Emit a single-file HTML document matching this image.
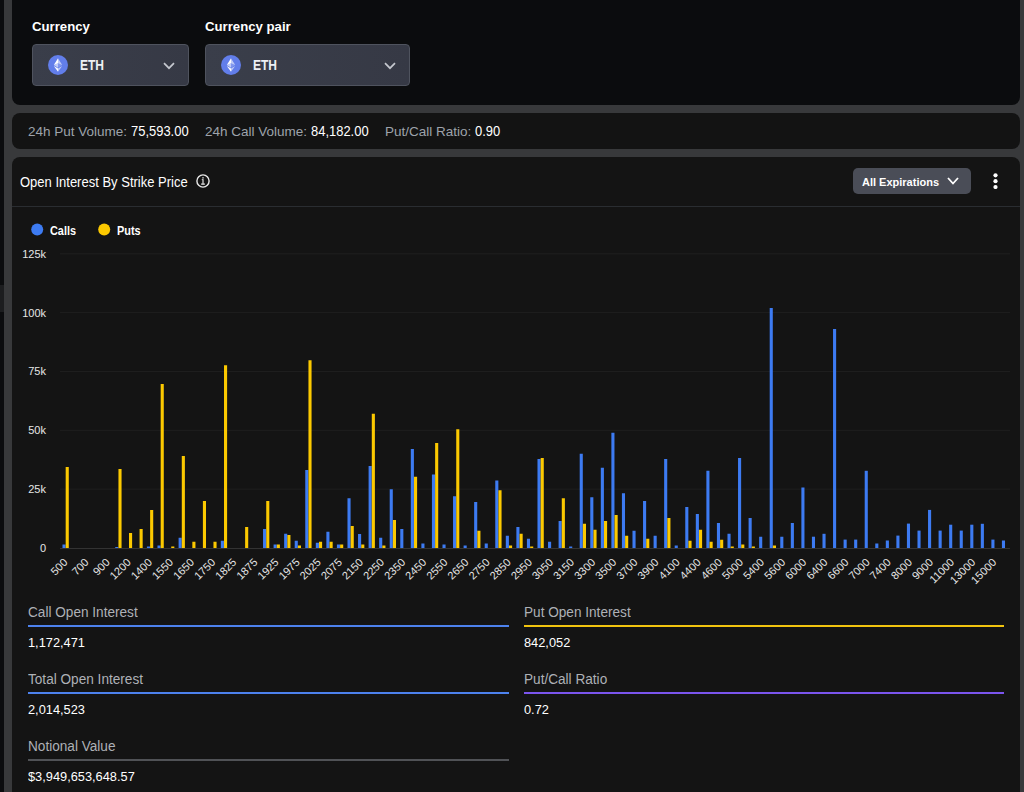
<!DOCTYPE html>
<html><head><meta charset="utf-8"><style>
*{margin:0;padding:0;box-sizing:border-box}
html,body{width:1024px;height:792px;overflow:hidden;background:#0b0c0e;font-family:"Liberation Sans",sans-serif;color:#fff}
.strip{position:absolute;left:4px;top:0;width:1020px;height:792px;background:#38393b}
.lstrip{position:absolute;left:0;top:285px;width:4px;height:27px;background:#1c1d1f}
.p1{position:absolute;left:12px;top:-10px;width:1008px;height:115px;background:#0b0c0e;border-radius:8px}
.p2{position:absolute;left:12px;top:113px;width:1008px;height:35.5px;background:#131313;border-radius:8px}
.p3{position:absolute;left:12px;top:157px;width:1008px;height:650px;background:#141414;border-radius:8px}
.lab{position:absolute;top:18.6px;font-weight:bold;font-size:13.2px;color:#fff}
.sel{position:absolute;top:44px;height:42px;background:linear-gradient(90deg,#3a3e4a,#363945);border:1px solid #4f535e;border-radius:4px}
.sel .ic{position:absolute;left:15px;top:10px;width:20px;height:20px}
.sel .t{position:absolute;top:11.5px;font-size:14.4px;font-weight:bold;color:#eef0f4;transform:scaleX(0.835);transform-origin:0 0}
.sel .ch{position:absolute;top:11px}
.stats{position:absolute;top:122.8px;font-size:13.5px;color:#9ea3ab;white-space:nowrap}
.stats b{font-weight:normal;color:#fff;font-size:14px;display:inline-block;transform:scaleX(0.925);transform-origin:0 0}
.title{position:absolute;left:20px;top:173.5px;font-size:14px;color:#fff;transform:scaleX(0.929);transform-origin:0 0;white-space:nowrap}
.info{position:absolute;left:196px;top:173.9px;width:14px;height:14px}
.divider{position:absolute;left:12px;top:206px;width:1008px;height:1px;background:#2a2d31}
.btn{position:absolute;left:853px;top:168px;width:118px;height:26px;background:#4a4d57;border-radius:5px}
.btn .t{position:absolute;left:9px;top:8px;font-size:11px;font-weight:bold;color:#fff}
.dots{position:absolute;left:993px;top:173px;width:5px;height:16px}
.leg{position:absolute;top:224px;font-size:12.6px;font-weight:bold;color:#fff;transform:scaleX(0.865);transform-origin:0 0}
.dot{position:absolute;top:223.2px;width:12px;height:12px;border-radius:6px}
svg.chart{position:absolute;left:0;top:0}
.yl{font-size:11px;fill:#e6e6e6;font-family:"Liberation Sans",sans-serif}
.xl{font-size:11px;fill:#e6e6e6;font-family:"Liberation Sans",sans-serif}
.sl{position:absolute;font-size:14px;color:#aeb1b7;margin-top:-0.3px;transform:scaleX(0.972);transform-origin:0 0;white-space:nowrap}
.sv{position:absolute;font-size:13.7px;color:#fff;margin-top:0.5px;transform:scaleX(0.935);transform-origin:0 0;white-space:nowrap}
.ln{position:absolute;height:2px}
</style></head><body>
<div class="strip"></div>
<div class="lstrip"></div>
<div class="p1"></div>
<div class="p2"></div>
<div class="p3"></div>
<div class="lab" style="left:32px">Currency</div>
<div class="lab" style="left:205px">Currency pair</div>
<div class="sel" style="left:32px;width:157px"><div class="ic"><svg width="20" height="20" viewBox="0 0 20 20"><circle cx="10" cy="10" r="10" fill="#627eea"/><path d="M10 3.2 L10 8.2 L14.2 10.1 Z" fill="#fff" fill-opacity="0.6"/><path d="M10 3.2 L5.8 10.1 L10 8.2 Z" fill="#fff"/><path d="M10 13.6 L10 16.8 L14.2 11 Z" fill="#fff" fill-opacity="0.6"/><path d="M10 16.8 L10 13.6 L5.8 11 Z" fill="#fff"/><path d="M10 12.8 L14.2 10.1 L10 8.2 Z" fill="#fff" fill-opacity="0.2"/><path d="M5.8 10.1 L10 12.8 L10 8.2 Z" fill="#fff" fill-opacity="0.6"/></svg></div><div class="t" style="left:47px">ETH</div><div class="ch" style="left:129.6px"><svg width="12" height="8" viewBox="0 0 12 8"><path d="M1 1.2 L6 6.2 L11 1.2" fill="none" stroke="#c4c7ce" stroke-width="1.7"/></svg></div></div>
<div class="sel" style="left:205px;width:205px"><div class="ic"><svg width="20" height="20" viewBox="0 0 20 20"><circle cx="10" cy="10" r="10" fill="#627eea"/><path d="M10 3.2 L10 8.2 L14.2 10.1 Z" fill="#fff" fill-opacity="0.6"/><path d="M10 3.2 L5.8 10.1 L10 8.2 Z" fill="#fff"/><path d="M10 13.6 L10 16.8 L14.2 11 Z" fill="#fff" fill-opacity="0.6"/><path d="M10 16.8 L10 13.6 L5.8 11 Z" fill="#fff"/><path d="M10 12.8 L14.2 10.1 L10 8.2 Z" fill="#fff" fill-opacity="0.2"/><path d="M5.8 10.1 L10 12.8 L10 8.2 Z" fill="#fff" fill-opacity="0.6"/></svg></div><div class="t" style="left:47px">ETH</div><div class="ch" style="left:177.6px"><svg width="12" height="8" viewBox="0 0 12 8"><path d="M1 1.2 L6 6.2 L11 1.2" fill="none" stroke="#c4c7ce" stroke-width="1.7"/></svg></div></div>
<div class="stats" style="left:28px">24h Put Volume: <b>75,593.00</b></div>
<div class="stats" style="left:205px">24h Call Volume: <b>84,182.00</b></div>
<div class="stats" style="left:385px">Put/Call Ratio: <b>0.90</b></div>
<div class="title">Open Interest By Strike Price</div>
<svg class="info" viewBox="0 0 14 14"><circle cx="7" cy="7" r="6.1" fill="none" stroke="#e8e8e8" stroke-width="1.4"/><rect x="6.3" y="3.2" width="1.4" height="1.3" fill="#e0e0e0"/><rect x="6.4" y="5.2" width="1.2" height="4.6" fill="#e0e0e0"/><rect x="5.8" y="5.2" width="1" height="0.9" fill="#e0e0e0"/><rect x="5.2" y="9.4" width="3.6" height="1.4" fill="#e0e0e0"/></svg>
<div class="divider"></div>
<div class="btn"><div class="t">All Expirations</div><svg style="position:absolute;left:94px;top:9px" width="12" height="8" viewBox="0 0 12 8"><path d="M1 1 L6 6.5 L11 1" fill="none" stroke="#fff" stroke-width="1.8"/></svg></div>
<svg class="dots" viewBox="0 0 5 16"><circle cx="2.5" cy="2.3" r="2.1" fill="#fff"/><circle cx="2.5" cy="8.2" r="2.1" fill="#fff"/><circle cx="2.5" cy="14" r="2.1" fill="#fff"/></svg>
<div class="leg" style="left:50px">Calls</div>
<div class="leg" style="left:117px">Puts</div>
<svg class="chart" width="1024" height="792">
<text x="46" y="552.00" text-anchor="end" class="yl">0</text>
<line x1="60.0" x2="1010.0" y1="489.16" y2="489.16" stroke="#1f1f1f" stroke-width="1"/>
<text x="46" y="493.16" text-anchor="end" class="yl">25k</text>
<line x1="60.0" x2="1010.0" y1="430.32" y2="430.32" stroke="#1f1f1f" stroke-width="1"/>
<text x="46" y="434.32" text-anchor="end" class="yl">50k</text>
<line x1="60.0" x2="1010.0" y1="371.48" y2="371.48" stroke="#1f1f1f" stroke-width="1"/>
<text x="46" y="375.48" text-anchor="end" class="yl">75k</text>
<line x1="60.0" x2="1010.0" y1="312.64" y2="312.64" stroke="#1f1f1f" stroke-width="1"/>
<text x="46" y="316.64" text-anchor="end" class="yl">100k</text>
<line x1="60.0" x2="1010.0" y1="253.80" y2="253.80" stroke="#1f1f1f" stroke-width="1"/>
<text x="46" y="257.80" text-anchor="end" class="yl">125k</text>
<line x1="60.0" x2="1010.0" y1="548.5" y2="548.5" stroke="#333" stroke-width="1"/>
<rect x="62.48" y="544.50" width="3.1" height="3.50" fill="#3d7bf2"/>
<rect x="65.68" y="467.00" width="3.1" height="81.00" fill="#fcc900"/>
<rect x="115.26" y="547.00" width="3.1" height="1.00" fill="#3d7bf2"/>
<rect x="118.46" y="469.00" width="3.1" height="79.00" fill="#fcc900"/>
<rect x="129.01" y="533.00" width="3.1" height="15.00" fill="#fcc900"/>
<rect x="139.57" y="529.00" width="3.1" height="19.00" fill="#fcc900"/>
<rect x="146.92" y="546.50" width="3.1" height="1.50" fill="#3d7bf2"/>
<rect x="150.12" y="510.00" width="3.1" height="38.00" fill="#fcc900"/>
<rect x="157.48" y="545.50" width="3.1" height="2.50" fill="#3d7bf2"/>
<rect x="160.68" y="384.00" width="3.1" height="164.00" fill="#fcc900"/>
<rect x="171.23" y="546.50" width="3.1" height="1.50" fill="#fcc900"/>
<rect x="178.59" y="537.75" width="3.1" height="10.25" fill="#3d7bf2"/>
<rect x="181.79" y="456.00" width="3.1" height="92.00" fill="#fcc900"/>
<rect x="192.34" y="541.75" width="3.1" height="6.25" fill="#fcc900"/>
<rect x="202.90" y="501.00" width="3.1" height="47.00" fill="#fcc900"/>
<rect x="213.46" y="541.75" width="3.1" height="6.25" fill="#fcc900"/>
<rect x="220.81" y="540.75" width="3.1" height="7.25" fill="#3d7bf2"/>
<rect x="224.01" y="365.25" width="3.1" height="182.75" fill="#fcc900"/>
<rect x="245.12" y="527.00" width="3.1" height="21.00" fill="#fcc900"/>
<rect x="263.03" y="529.00" width="3.1" height="19.00" fill="#3d7bf2"/>
<rect x="266.23" y="501.00" width="3.1" height="47.00" fill="#fcc900"/>
<rect x="273.59" y="544.50" width="3.1" height="3.50" fill="#3d7bf2"/>
<rect x="276.79" y="544.50" width="3.1" height="3.50" fill="#fcc900"/>
<rect x="284.14" y="533.75" width="3.1" height="14.25" fill="#3d7bf2"/>
<rect x="287.34" y="535.00" width="3.1" height="13.00" fill="#fcc900"/>
<rect x="294.70" y="540.75" width="3.1" height="7.25" fill="#3d7bf2"/>
<rect x="297.90" y="545.50" width="3.1" height="2.50" fill="#fcc900"/>
<rect x="305.26" y="470.00" width="3.1" height="78.00" fill="#3d7bf2"/>
<rect x="308.46" y="360.25" width="3.1" height="187.75" fill="#fcc900"/>
<rect x="315.81" y="542.75" width="3.1" height="5.25" fill="#3d7bf2"/>
<rect x="319.01" y="541.75" width="3.1" height="6.25" fill="#fcc900"/>
<rect x="326.37" y="531.75" width="3.1" height="16.25" fill="#3d7bf2"/>
<rect x="329.57" y="541.75" width="3.1" height="6.25" fill="#fcc900"/>
<rect x="336.92" y="544.50" width="3.1" height="3.50" fill="#3d7bf2"/>
<rect x="340.12" y="544.50" width="3.1" height="3.50" fill="#fcc900"/>
<rect x="347.48" y="498.25" width="3.1" height="49.75" fill="#3d7bf2"/>
<rect x="350.68" y="526.00" width="3.1" height="22.00" fill="#fcc900"/>
<rect x="358.03" y="534.00" width="3.1" height="14.00" fill="#3d7bf2"/>
<rect x="361.23" y="544.50" width="3.1" height="3.50" fill="#fcc900"/>
<rect x="368.59" y="466.00" width="3.1" height="82.00" fill="#3d7bf2"/>
<rect x="371.79" y="413.75" width="3.1" height="134.25" fill="#fcc900"/>
<rect x="379.14" y="537.75" width="3.1" height="10.25" fill="#3d7bf2"/>
<rect x="382.34" y="545.50" width="3.1" height="2.50" fill="#fcc900"/>
<rect x="389.70" y="489.25" width="3.1" height="58.75" fill="#3d7bf2"/>
<rect x="392.90" y="520.00" width="3.1" height="28.00" fill="#fcc900"/>
<rect x="400.26" y="529.00" width="3.1" height="19.00" fill="#3d7bf2"/>
<rect x="410.81" y="449.00" width="3.1" height="99.00" fill="#3d7bf2"/>
<rect x="414.01" y="476.75" width="3.1" height="71.25" fill="#fcc900"/>
<rect x="421.37" y="543.50" width="3.1" height="4.50" fill="#3d7bf2"/>
<rect x="431.92" y="474.50" width="3.1" height="73.50" fill="#3d7bf2"/>
<rect x="435.12" y="443.00" width="3.1" height="105.00" fill="#fcc900"/>
<rect x="442.48" y="544.50" width="3.1" height="3.50" fill="#3d7bf2"/>
<rect x="453.03" y="496.25" width="3.1" height="51.75" fill="#3d7bf2"/>
<rect x="456.23" y="429.25" width="3.1" height="118.75" fill="#fcc900"/>
<rect x="463.59" y="545.50" width="3.1" height="2.50" fill="#3d7bf2"/>
<rect x="474.14" y="502.00" width="3.1" height="46.00" fill="#3d7bf2"/>
<rect x="477.34" y="530.75" width="3.1" height="17.25" fill="#fcc900"/>
<rect x="484.70" y="543.50" width="3.1" height="4.50" fill="#3d7bf2"/>
<rect x="495.26" y="480.50" width="3.1" height="67.50" fill="#3d7bf2"/>
<rect x="498.46" y="490.25" width="3.1" height="57.75" fill="#fcc900"/>
<rect x="505.81" y="535.75" width="3.1" height="12.25" fill="#3d7bf2"/>
<rect x="509.01" y="545.50" width="3.1" height="2.50" fill="#fcc900"/>
<rect x="516.37" y="527.00" width="3.1" height="21.00" fill="#3d7bf2"/>
<rect x="519.57" y="533.75" width="3.1" height="14.25" fill="#fcc900"/>
<rect x="526.92" y="538.75" width="3.1" height="9.25" fill="#3d7bf2"/>
<rect x="530.12" y="546.50" width="3.1" height="1.50" fill="#fcc900"/>
<rect x="537.48" y="459.00" width="3.1" height="89.00" fill="#3d7bf2"/>
<rect x="540.68" y="458.00" width="3.1" height="90.00" fill="#fcc900"/>
<rect x="548.03" y="541.75" width="3.1" height="6.25" fill="#3d7bf2"/>
<rect x="558.59" y="521.00" width="3.1" height="27.00" fill="#3d7bf2"/>
<rect x="561.79" y="498.25" width="3.1" height="49.75" fill="#fcc900"/>
<rect x="569.14" y="546.50" width="3.1" height="1.50" fill="#3d7bf2"/>
<rect x="579.70" y="453.75" width="3.1" height="94.25" fill="#3d7bf2"/>
<rect x="582.90" y="523.75" width="3.1" height="24.25" fill="#fcc900"/>
<rect x="590.26" y="497.25" width="3.1" height="50.75" fill="#3d7bf2"/>
<rect x="593.46" y="529.75" width="3.1" height="18.25" fill="#fcc900"/>
<rect x="600.81" y="467.75" width="3.1" height="80.25" fill="#3d7bf2"/>
<rect x="604.01" y="521.00" width="3.1" height="27.00" fill="#fcc900"/>
<rect x="611.37" y="432.75" width="3.1" height="115.25" fill="#3d7bf2"/>
<rect x="614.57" y="515.00" width="3.1" height="33.00" fill="#fcc900"/>
<rect x="621.92" y="493.25" width="3.1" height="54.75" fill="#3d7bf2"/>
<rect x="625.12" y="535.75" width="3.1" height="12.25" fill="#fcc900"/>
<rect x="632.48" y="530.75" width="3.1" height="17.25" fill="#3d7bf2"/>
<rect x="643.03" y="501.00" width="3.1" height="47.00" fill="#3d7bf2"/>
<rect x="646.23" y="538.75" width="3.1" height="9.25" fill="#fcc900"/>
<rect x="653.59" y="535.75" width="3.1" height="12.25" fill="#3d7bf2"/>
<rect x="664.14" y="459.00" width="3.1" height="89.00" fill="#3d7bf2"/>
<rect x="667.34" y="518.00" width="3.1" height="30.00" fill="#fcc900"/>
<rect x="674.70" y="545.50" width="3.1" height="2.50" fill="#3d7bf2"/>
<rect x="685.26" y="507.00" width="3.1" height="41.00" fill="#3d7bf2"/>
<rect x="688.46" y="540.75" width="3.1" height="7.25" fill="#fcc900"/>
<rect x="695.81" y="514.00" width="3.1" height="34.00" fill="#3d7bf2"/>
<rect x="699.01" y="529.75" width="3.1" height="18.25" fill="#fcc900"/>
<rect x="706.37" y="470.75" width="3.1" height="77.25" fill="#3d7bf2"/>
<rect x="709.57" y="541.75" width="3.1" height="6.25" fill="#fcc900"/>
<rect x="716.92" y="523.00" width="3.1" height="25.00" fill="#3d7bf2"/>
<rect x="720.12" y="539.75" width="3.1" height="8.25" fill="#fcc900"/>
<rect x="727.48" y="533.75" width="3.1" height="14.25" fill="#3d7bf2"/>
<rect x="730.68" y="546.50" width="3.1" height="1.50" fill="#fcc900"/>
<rect x="738.03" y="458.00" width="3.1" height="90.00" fill="#3d7bf2"/>
<rect x="741.23" y="544.50" width="3.1" height="3.50" fill="#fcc900"/>
<rect x="748.59" y="518.00" width="3.1" height="30.00" fill="#3d7bf2"/>
<rect x="751.79" y="546.50" width="3.1" height="1.50" fill="#fcc900"/>
<rect x="759.14" y="536.75" width="3.1" height="11.25" fill="#3d7bf2"/>
<rect x="769.70" y="308.00" width="3.1" height="240.00" fill="#3d7bf2"/>
<rect x="772.90" y="545.50" width="3.1" height="2.50" fill="#fcc900"/>
<rect x="780.26" y="536.75" width="3.1" height="11.25" fill="#3d7bf2"/>
<rect x="790.81" y="523.00" width="3.1" height="25.00" fill="#3d7bf2"/>
<rect x="801.37" y="487.50" width="3.1" height="60.50" fill="#3d7bf2"/>
<rect x="811.92" y="536.70" width="3.1" height="11.30" fill="#3d7bf2"/>
<rect x="822.48" y="533.80" width="3.1" height="14.20" fill="#3d7bf2"/>
<rect x="833.03" y="329.00" width="3.1" height="219.00" fill="#3d7bf2"/>
<rect x="843.59" y="539.60" width="3.1" height="8.40" fill="#3d7bf2"/>
<rect x="854.14" y="539.60" width="3.1" height="8.40" fill="#3d7bf2"/>
<rect x="864.70" y="470.80" width="3.1" height="77.20" fill="#3d7bf2"/>
<rect x="875.26" y="543.50" width="3.1" height="4.50" fill="#3d7bf2"/>
<rect x="885.81" y="540.50" width="3.1" height="7.50" fill="#3d7bf2"/>
<rect x="896.37" y="535.60" width="3.1" height="12.40" fill="#3d7bf2"/>
<rect x="906.92" y="523.60" width="3.1" height="24.40" fill="#3d7bf2"/>
<rect x="917.48" y="530.60" width="3.1" height="17.40" fill="#3d7bf2"/>
<rect x="928.03" y="509.90" width="3.1" height="38.10" fill="#3d7bf2"/>
<rect x="938.59" y="530.60" width="3.1" height="17.40" fill="#3d7bf2"/>
<rect x="949.14" y="524.70" width="3.1" height="23.30" fill="#3d7bf2"/>
<rect x="959.70" y="530.60" width="3.1" height="17.40" fill="#3d7bf2"/>
<rect x="970.26" y="524.70" width="3.1" height="23.30" fill="#3d7bf2"/>
<rect x="980.81" y="523.80" width="3.1" height="24.20" fill="#3d7bf2"/>
<rect x="991.37" y="539.60" width="3.1" height="8.40" fill="#3d7bf2"/>
<rect x="1001.92" y="540.50" width="3.1" height="7.50" fill="#3d7bf2"/>
<text x="68.28" y="563.0" text-anchor="end" transform="rotate(-45 68.28 563.0)" class="xl">500</text>
<text x="89.39" y="563.0" text-anchor="end" transform="rotate(-45 89.39 563.0)" class="xl">700</text>
<text x="110.50" y="563.0" text-anchor="end" transform="rotate(-45 110.50 563.0)" class="xl">900</text>
<text x="131.61" y="563.0" text-anchor="end" transform="rotate(-45 131.61 563.0)" class="xl">1200</text>
<text x="152.72" y="563.0" text-anchor="end" transform="rotate(-45 152.72 563.0)" class="xl">1400</text>
<text x="173.83" y="563.0" text-anchor="end" transform="rotate(-45 173.83 563.0)" class="xl">1550</text>
<text x="194.94" y="563.0" text-anchor="end" transform="rotate(-45 194.94 563.0)" class="xl">1650</text>
<text x="216.06" y="563.0" text-anchor="end" transform="rotate(-45 216.06 563.0)" class="xl">1750</text>
<text x="237.17" y="563.0" text-anchor="end" transform="rotate(-45 237.17 563.0)" class="xl">1825</text>
<text x="258.28" y="563.0" text-anchor="end" transform="rotate(-45 258.28 563.0)" class="xl">1875</text>
<text x="279.39" y="563.0" text-anchor="end" transform="rotate(-45 279.39 563.0)" class="xl">1925</text>
<text x="300.50" y="563.0" text-anchor="end" transform="rotate(-45 300.50 563.0)" class="xl">1975</text>
<text x="321.61" y="563.0" text-anchor="end" transform="rotate(-45 321.61 563.0)" class="xl">2025</text>
<text x="342.72" y="563.0" text-anchor="end" transform="rotate(-45 342.72 563.0)" class="xl">2075</text>
<text x="363.83" y="563.0" text-anchor="end" transform="rotate(-45 363.83 563.0)" class="xl">2150</text>
<text x="384.94" y="563.0" text-anchor="end" transform="rotate(-45 384.94 563.0)" class="xl">2250</text>
<text x="406.06" y="563.0" text-anchor="end" transform="rotate(-45 406.06 563.0)" class="xl">2350</text>
<text x="427.17" y="563.0" text-anchor="end" transform="rotate(-45 427.17 563.0)" class="xl">2450</text>
<text x="448.28" y="563.0" text-anchor="end" transform="rotate(-45 448.28 563.0)" class="xl">2550</text>
<text x="469.39" y="563.0" text-anchor="end" transform="rotate(-45 469.39 563.0)" class="xl">2650</text>
<text x="490.50" y="563.0" text-anchor="end" transform="rotate(-45 490.50 563.0)" class="xl">2750</text>
<text x="511.61" y="563.0" text-anchor="end" transform="rotate(-45 511.61 563.0)" class="xl">2850</text>
<text x="532.72" y="563.0" text-anchor="end" transform="rotate(-45 532.72 563.0)" class="xl">2950</text>
<text x="553.83" y="563.0" text-anchor="end" transform="rotate(-45 553.83 563.0)" class="xl">3050</text>
<text x="574.94" y="563.0" text-anchor="end" transform="rotate(-45 574.94 563.0)" class="xl">3150</text>
<text x="596.06" y="563.0" text-anchor="end" transform="rotate(-45 596.06 563.0)" class="xl">3300</text>
<text x="617.17" y="563.0" text-anchor="end" transform="rotate(-45 617.17 563.0)" class="xl">3500</text>
<text x="638.28" y="563.0" text-anchor="end" transform="rotate(-45 638.28 563.0)" class="xl">3700</text>
<text x="659.39" y="563.0" text-anchor="end" transform="rotate(-45 659.39 563.0)" class="xl">3900</text>
<text x="680.50" y="563.0" text-anchor="end" transform="rotate(-45 680.50 563.0)" class="xl">4100</text>
<text x="701.61" y="563.0" text-anchor="end" transform="rotate(-45 701.61 563.0)" class="xl">4400</text>
<text x="722.72" y="563.0" text-anchor="end" transform="rotate(-45 722.72 563.0)" class="xl">4600</text>
<text x="743.83" y="563.0" text-anchor="end" transform="rotate(-45 743.83 563.0)" class="xl">5000</text>
<text x="764.94" y="563.0" text-anchor="end" transform="rotate(-45 764.94 563.0)" class="xl">5400</text>
<text x="786.06" y="563.0" text-anchor="end" transform="rotate(-45 786.06 563.0)" class="xl">5600</text>
<text x="807.17" y="563.0" text-anchor="end" transform="rotate(-45 807.17 563.0)" class="xl">6000</text>
<text x="828.28" y="563.0" text-anchor="end" transform="rotate(-45 828.28 563.0)" class="xl">6400</text>
<text x="849.39" y="563.0" text-anchor="end" transform="rotate(-45 849.39 563.0)" class="xl">6600</text>
<text x="870.50" y="563.0" text-anchor="end" transform="rotate(-45 870.50 563.0)" class="xl">7000</text>
<text x="891.61" y="563.0" text-anchor="end" transform="rotate(-45 891.61 563.0)" class="xl">7400</text>
<text x="912.72" y="563.0" text-anchor="end" transform="rotate(-45 912.72 563.0)" class="xl">8000</text>
<text x="933.83" y="563.0" text-anchor="end" transform="rotate(-45 933.83 563.0)" class="xl">9000</text>
<text x="954.94" y="563.0" text-anchor="end" transform="rotate(-45 954.94 563.0)" class="xl">11000</text>
<text x="976.06" y="563.0" text-anchor="end" transform="rotate(-45 976.06 563.0)" class="xl">13000</text>
<text x="997.17" y="563.0" text-anchor="end" transform="rotate(-45 997.17 563.0)" class="xl">15000</text>
<circle cx="37.2" cy="229.6" r="6" fill="#3d7bf2"/><circle cx="104.2" cy="229.6" r="6" fill="#fcc900"/>
</svg>
<div class="sl" style="left:28px;top:604px">Call Open Interest</div>
<div class="ln" style="left:28px;top:625px;width:481px;background:#4d82ee"></div>
<div class="sv" style="left:28px;top:634px">1,172,471</div>
<div class="sl" style="left:524px;top:604px">Put Open Interest</div>
<div class="ln" style="left:524px;top:625px;width:480px;background:#f1c40f"></div>
<div class="sv" style="left:524px;top:634px">842,052</div>
<div class="sl" style="left:28px;top:671px">Total Open Interest</div>
<div class="ln" style="left:28px;top:692px;width:481px;background:#4d82ee"></div>
<div class="sv" style="left:28px;top:701px">2,014,523</div>
<div class="sl" style="left:524px;top:671px">Put/Call Ratio</div>
<div class="ln" style="left:524px;top:692px;width:480px;background:#7b55ee"></div>
<div class="sv" style="left:524px;top:701px">0.72</div>
<div class="sl" style="left:28px;top:738px">Notional Value</div>
<div class="ln" style="left:28px;top:759px;width:481px;background:#505256"></div>
<div class="sv" style="left:28px;top:768px">$3,949,653,648.57</div>
</body></html>
